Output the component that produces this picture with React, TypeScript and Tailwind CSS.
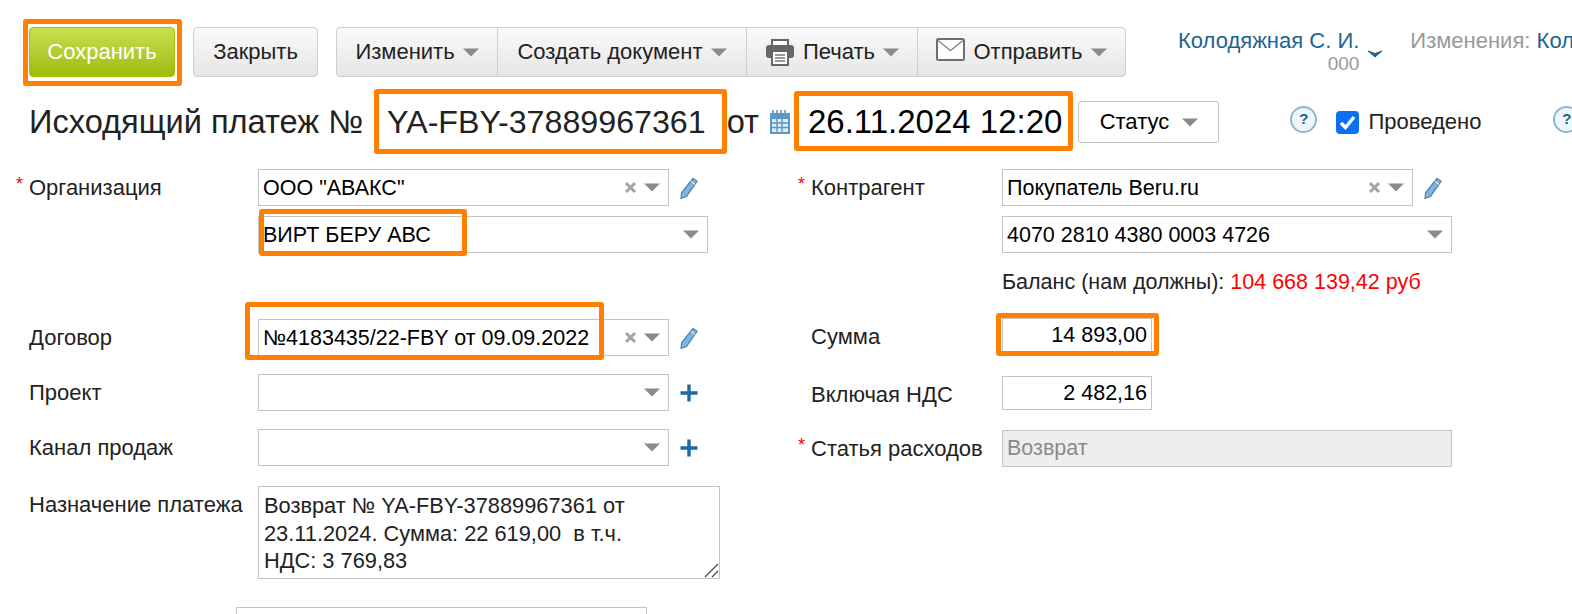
import type { ReactNode } from 'react';

const Caret = ({ className = 'text-[#8a8a8a]' }: { className?: string }) => (
  <svg width="16" height="9" viewBox="0 0 16 9" className={`shrink-0 ${className}`}>
    <path d="M0 0.5h16L8 8.5z" fill="currentColor" />
  </svg>
);

const Cross = () => (
  <svg width="13" height="13" viewBox="0 0 13 13" className="shrink-0">
    <path d="M2 2l9 9M11 2l-9 9" stroke="#a3a3a3" strokeWidth="3" />
  </svg>
);

const Pencil = () => (
  <svg width="20" height="24" viewBox="0 0 20 24" className="shrink-0">
    <path d="M14 2.500l4 2.800L7.500 20.500 2 22.500l.6-5.800z" fill="#7fb2de" stroke="#4f7ea8" strokeWidth="1.2" strokeLinejoin="round" />
    <path d="M12 5.500l4 2.800" stroke="#d7e8f6" strokeWidth="1.2" />
  </svg>
);

const Plus = () => (
  <svg width="18" height="18" viewBox="0 0 18 18" className="shrink-0">
    <path d="M9 0.500v17M0.500 9h17" stroke="#1f6aa5" strokeWidth="3.4" />
  </svg>
);

const Help = () => (
  <span className="flex w-[27px] h-[27px] shrink-0 items-center justify-center rounded-full border-2 border-[#8db6d3] bg-[#eef6fc] text-[15px] font-bold text-[#1f6390]">
    ?
  </span>
);

const Printer = () => (
  <svg width="30" height="28" viewBox="0 0 30 28" className="shrink-0">
    <path d="M7 7V2h16v5" fill="#fff" stroke="#666" strokeWidth="2" />
    <rect x="1" y="7" width="28" height="13" rx="3" fill="#666" />
    <rect x="7" y="13" width="16" height="14" fill="#fff" stroke="#666" strokeWidth="2" />
    <path d="M10 17h10M10 20h10M10 23h10" stroke="#777" strokeWidth="1.4" />
  </svg>
);

const Envelope = () => (
  <svg width="29" height="23" viewBox="0 0 29 23" className="shrink-0 -mt-[5px]">
    <rect x="1" y="1" width="27" height="21" rx="1.500" fill="#fff" stroke="#6f6f6f" strokeWidth="2" />
    <path d="M2 2.500l12.500 10L27 2.500" fill="none" stroke="#8a8a8a" strokeWidth="1.6" />
  </svg>
);

const CalendarIcon = () => (
  <svg width="20" height="24" viewBox="0 0 20 24" className="shrink-0">
    <rect x="0" y="3" width="20" height="21" fill="#5b97c8" />
    <rect x="2" y="9" width="16" height="13" fill="#dcebf6" />
    <path d="M3 0v5M7 0v5M11 0v5M15 0v5" stroke="#5b97c8" strokeWidth="1.6" />
    <path d="M2 13h16M2 17.500h16M7 9v13M12 9v13" stroke="#5b97c8" strokeWidth="1.4" />
  </svg>
);

// the orange annotation frames sit over the page content
const Mark = ({ className }: { className: string }) => (
  <div className={`absolute rounded-[3px] border-[5px] border-[#ff8000] pointer-events-none ${className}`} />
);

const Select = ({ value, clear, wide, icon }: { value?: string; clear?: boolean; wide?: boolean; icon?: ReactNode }) => (
  <div className="flex items-center h-[37px]">
    <div className={`flex items-center h-full border border-[#c4c4c4] bg-white pl-1 pr-2 ${wide ? 'w-[450px]' : 'w-[411px]'}`}>
      <span className="flex-1 truncate text-black pt-[1px]">{value}</span>
      {clear && <span className="mr-[7px]"><Cross /></span>}
      <Caret className="text-[#8a8a8a]" />
    </div>
    {icon && <span className="ml-[10px] flex w-5 justify-center">{icon}</span>}
  </div>
);

const Label = ({ children, required }: { children: string; required?: boolean }) => (
  <div className="relative w-[229px] shrink-0 h-[37px] flex items-center text-[22px] text-[#222]">
    {required && <span className="absolute -left-[13px] top-[2px] text-[#f00] text-[18px]">*</span>}
    {children}
  </div>
);

export default function App() {
  return (
    <div className="w-[1572px] h-[614px] overflow-hidden bg-white text-[21.5px] text-[#222] font-['Liberation_Sans',Arial,sans-serif]">
      {/* Toolbar */}
      <div className="flex items-start pt-[27px] pl-[29px] h-[87px] whitespace-nowrap">
        <div className="relative shrink-0">
          <div className="flex items-center justify-center w-[146px] h-[50px] pb-[2px] rounded-[4px] border border-[#a9c200] bg-gradient-to-b from-[#c9e04d] to-[#a0ba00] text-white text-[22px]">
            Сохранить
          </div>
          <Mark className="-left-[6px] -top-[8px] -right-[7px] -bottom-[9px]" />
        </div>
        <div className="ml-[18px] shrink-0 flex items-center justify-center w-[125px] h-[50px] pb-[2px] rounded-[4px] border border-[#cfcfcf] bg-gradient-to-b from-[#fafafa] to-[#e6e6e6] text-[22px]">
          Закрыть
        </div>
        <div className="ml-[18px] shrink-0 flex h-[50px] w-[790px] rounded-[4px] border border-[#cfcfcf] bg-gradient-to-b from-[#fafafa] to-[#e6e6e6] text-[22px]">
          <div className="flex w-[161px] items-center justify-center gap-[8px] border-r border-[#cfcfcf]">
            <span className="-mt-[2px]">Изменить</span> <Caret />
          </div>
          <div className="flex w-[249px] items-center justify-center gap-[8px] border-r border-[#cfcfcf]">
            <span className="-mt-[2px]">Создать документ</span> <Caret />
          </div>
          <div className="flex w-[171px] items-center justify-center gap-[8px] border-r border-[#cfcfcf]">
            <Printer /> <span className="-mt-[2px]">Печать</span> <Caret />
          </div>
          <div className="flex flex-1 items-center justify-center gap-[8px]">
            <Envelope /> <span className="-mt-[2px]">Отправить</span> <Caret />
          </div>
        </div>
        <div className="ml-[52px] shrink-0 pt-[1px] flex flex-col items-end text-[#1f6390] text-[22px] leading-[26px]">
          <span>Колодяжная С. И.</span>
          <span className="text-[#999] text-[19px] leading-[20px]">000</span>
        </div>
        <span className="ml-[9px] mt-[23px] shrink-0">
          <svg width="14" height="8" viewBox="0 0 14 8"><path d="M0 1l7 6 7-6-7 2.500z" fill="#1f6390" stroke="#1f6390" strokeWidth="1" /></svg>
        </span>
        <div className="ml-[28px] shrink-0 pt-[1px] text-[22px] leading-[26px] text-[#999]">
          Изменения: <span className="text-[#1f6390]">Кол</span>
        </div>
      </div>

      {/* Title row */}
      <div className="flex items-center h-[70px] pl-[29px] whitespace-nowrap text-[32.6px] leading-[40px]">
        <span className="shrink-0">Исходящий платеж №</span>
        <div className="relative ml-[24px] shrink-0 text-[32.2px]">
          YA-FBY-37889967361
          <Mark className="-left-[13px] -top-[13px] -right-[21px] -bottom-[12px]" />
        </div>
        <span className="ml-[21px] shrink-0">от</span>
        <span className="ml-[11px] shrink-0"><CalendarIcon /></span>
        <div className="relative ml-[18px] shrink-0 text-black text-[33px]">
          26.11.2024 12:20
          <Mark className="-left-[14px] -top-[11px] -right-[11px] -bottom-[9px]" />
        </div>
        <div className="ml-[16px] shrink-0 flex h-[42px] w-[141px] items-center justify-center gap-[13px] rounded-[3px] border border-[#c4c4c4] text-[22px] text-black">
          Статус <Caret />
        </div>
        <span className="ml-[71px] -mt-[6px] shrink-0"><Help /></span>
        <span className="ml-[19px] shrink-0 flex w-[23px] h-[23px] items-center justify-center rounded-[4px] bg-[#0a70f5]">
          <svg width="17" height="15" viewBox="0 0 17 15"><path d="M2 8l4.500 4.500L15 2" fill="none" stroke="#fff" strokeWidth="3.400" /></svg>
        </span>
        <span className="ml-[9px] shrink-0 text-[22px]">Проведено</span>
        <span className="ml-[72px] -mt-[6px] shrink-0"><Help /></span>
      </div>

      {/* Form */}
      <div className="flex pt-[12px] pl-[29px]">
        <div className="w-[781px] shrink-0 flex flex-col">
          <div className="flex">
            <Label required>Организация</Label>
            <Select value={'ООО "АВАКС"'} clear icon={<Pencil />} />
          </div>
          <div className="ml-[229px] mt-[10px] relative w-[450px]">
            <Select value="ВИРТ БЕРУ АВС" wide />
            <Mark className="left-[1px] -top-[7px] w-[208px] -bottom-[3px]" />
          </div>
          <div className="flex mt-[66px]">
            <Label>Договор</Label>
            <div className="relative">
              <Select value="№4183435/22-FBY от 09.09.2022" clear icon={<Pencil />} />
              <Mark className="-left-[13px] -top-[17px] w-[359px] -bottom-[4px]" />
            </div>
          </div>
          <div className="flex mt-[18px]">
            <Label>Проект</Label>
            <Select icon={<Plus />} />
          </div>
          <div className="flex mt-[18px]">
            <Label>Канал продаж</Label>
            <Select icon={<Plus />} />
          </div>
          <div className="flex mt-[20px]">
            <div className="w-[229px] shrink-0 pt-[2px] whitespace-nowrap text-[22px]">Назначение платежа</div>
            <div className="relative w-[462px] h-[93px] border border-[#c4c4c4] px-[5px] pt-[5px] text-[21.8px] leading-[27.500px]">
              <div>Возврат № YA-FBY-37889967361 от</div>
              <div className="whitespace-pre">23.11.2024. Сумма: 22 619,00  в т.ч.</div>
              <div>НДС: 3 769,83</div>
              <svg width="16" height="16" viewBox="0 0 16 16" className="absolute right-0 bottom-0">
                <path d="M2 15L15 2M9 15l6-6" stroke="#444" strokeWidth="1.100" />
              </svg>
            </div>
          </div>
          <div className="ml-[207px] mt-[28px] w-[411px] h-[40px] border border-[#c4c4c4]" />
        </div>

        <div className="flex flex-col ml-[1px] whitespace-nowrap">
          <div className="flex">
            <Label required>Контрагент</Label>
            <div className="-ml-[38px]"><Select value="Покупатель Beru.ru" clear icon={<Pencil />} /></div>
          </div>
          <div className="ml-[191px] mt-[10px]">
            <Select value="4070 2810 4380 0003 4726" wide />
          </div>
          <div className="ml-[191px] mt-[17px] h-[24px] flex items-center">
            Баланс (нам должны):&nbsp;<span className="text-[#f00]">104 668 139,42 руб</span>
          </div>
          <div className="flex mt-[24px]">
            <Label>Сумма</Label>
            <div className="-ml-[38px] relative w-[150px] h-[34px] flex items-center justify-end pr-[4px] border border-[#c4c4c4] text-black">
              14 893,00
              <Mark className="-left-[7px] -top-[6px] -right-[8px] -bottom-[5px]" />
            </div>
          </div>
          <div className="flex mt-[21px]">
            <Label>Включая НДС</Label>
            <div className="-ml-[38px] w-[150px] h-[34px] flex items-center justify-end pr-[4px] border border-[#c4c4c4] text-black">
              2 482,16
            </div>
          </div>
          <div className="flex mt-[17px]">
            <Label required>Статья расходов</Label>
            <div className="-ml-[38px] w-[450px] h-[37px] flex items-center pl-[4px] border border-[#c4c4c4] bg-[#eee] text-[#8a8a8a]">
              Возврат
            </div>
          </div>
        </div>
      </div>
    </div>
  );
}
